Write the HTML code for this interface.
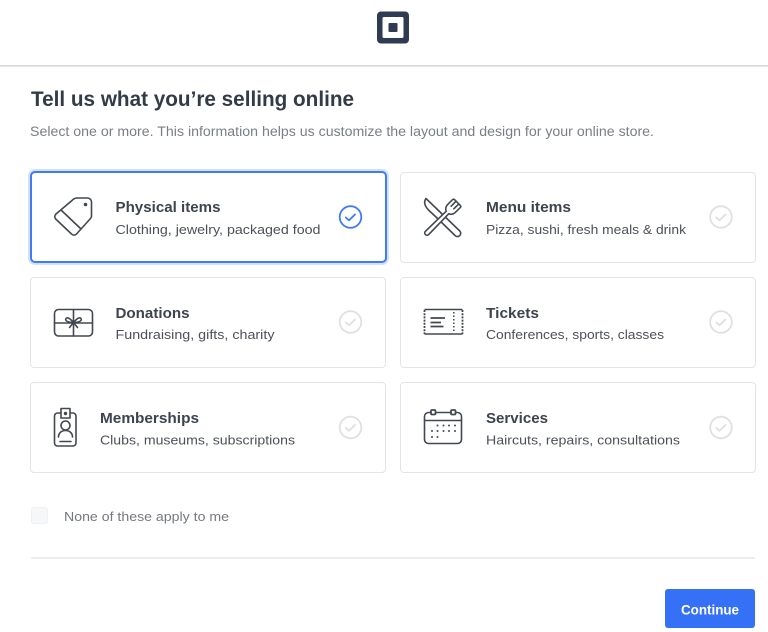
<!DOCTYPE html>
<html lang="en">
<head>
<meta charset="utf-8">
<title>Tell us what you're selling online</title>
<style>
html,body{margin:0;padding:0;background:#fff;}
body{width:768px;height:632px;position:relative;overflow:hidden;font-family:"Liberation Sans",sans-serif;}
.hdr{position:absolute;left:0;top:0;width:768px;height:65px;background:#fff;border-bottom:1px solid #d6d7d9;box-shadow:0 1px 1px #e4e4e4;}
.card{position:absolute;box-sizing:border-box;width:356px;height:91px;background:#fff;border:1px solid #e3e4e6;border-radius:4px;}
.card.sel{left:29.5px;top:170.5px;width:357px;height:92.5px;border:2px solid #3f7bf6;border-radius:5px;box-shadow:0 0 0 2px #d3e1fd;}
.cb{position:absolute;left:31px;top:507px;width:17px;height:17px;box-sizing:border-box;background:#f6f7f9;border:1px solid #eff0f2;border-radius:3px;}
.div{position:absolute;left:31px;top:557px;width:724px;height:2px;background:#ededee;border-radius:1px;}
.btn{position:absolute;left:665px;top:589px;width:90px;height:39px;background:#3571f6;border-radius:3px;}
svg.o{position:absolute;left:0;top:0;}
.t{font-size:14.5px;font-weight:700;fill:#3e444d;}
.s{font-size:13px;fill:#4c5159;}
.i{fill:none;stroke:#434850;stroke-width:1.6;stroke-linecap:round;stroke-linejoin:round;}
.d{fill:#434850;}
</style>
</head>
<body>
<div class="hdr"></div>
<div class="card sel"></div>
<div class="card" style="left:400px;top:171.5px"></div>
<div class="card" style="left:30px;top:277px"></div>
<div class="card" style="left:400px;top:277px"></div>
<div class="card" style="left:30px;top:382px"></div>
<div class="card" style="left:400px;top:382px"></div>
<div class="cb"></div>
<div class="div"></div>
<div class="btn"></div>
<svg class="o" width="768" height="632" viewBox="0 0 768 632" xmlns="http://www.w3.org/2000/svg">
  <!-- logo -->
  <path fill-rule="evenodd" fill="#2e3b52" d="M381 11.500h24a4 4 0 0 1 4 4v24a4 4 0 0 1-4 4h-24a4 4 0 0 1-4-4v-24a4 4 0 0 1 4-4zM384 17a1.500 1.500 0 0 0-1.500 1.500v18a1.500 1.500 0 0 0 1.500 1.500h18a1.500 1.500 0 0 0 1.500-1.500v-18a1.500 1.500 0 0 0-1.500-1.500z"/>
  <rect x="388.500" y="23" width="9" height="9" rx="1" fill="#2e3b52"/>

  <!-- heading -->
  <text x="31" y="106" font-size="21" font-weight="700" fill="#333b47" textLength="323" lengthAdjust="spacingAndGlyphs">Tell us what you’re selling online</text>
  <text x="30" y="136" font-size="13.500" fill="#7a7e85" textLength="624" lengthAdjust="spacingAndGlyphs">Select one or more. This information helps us customize the layout and design for your online store.</text>

  <!-- card text -->
  <text class="t" x="115.500" y="212" textLength="105" lengthAdjust="spacingAndGlyphs">Physical items</text>
  <text class="s" x="115.500" y="234" textLength="205" lengthAdjust="spacingAndGlyphs">Clothing, jewelry, packaged food</text>
  <text class="t" x="486" y="212" textLength="85" lengthAdjust="spacingAndGlyphs">Menu items</text>
  <text class="s" x="486" y="234" textLength="200" lengthAdjust="spacingAndGlyphs">Pizza, sushi, fresh meals &amp; drink</text>
  <text class="t" x="115.500" y="318" textLength="74" lengthAdjust="spacingAndGlyphs">Donations</text>
  <text class="s" x="115.500" y="339" textLength="159" lengthAdjust="spacingAndGlyphs">Fundraising, gifts, charity</text>
  <text class="t" x="486" y="318" textLength="53" lengthAdjust="spacingAndGlyphs">Tickets</text>
  <text class="s" x="486" y="339" textLength="178" lengthAdjust="spacingAndGlyphs">Conferences, sports, classes</text>
  <text class="t" x="100" y="423" textLength="99" lengthAdjust="spacingAndGlyphs">Memberships</text>
  <text class="s" x="100" y="444.500" textLength="195" lengthAdjust="spacingAndGlyphs">Clubs, museums, subscriptions</text>
  <text class="t" x="486" y="423" textLength="62" lengthAdjust="spacingAndGlyphs">Services</text>
  <text class="s" x="486" y="444.500" textLength="194" lengthAdjust="spacingAndGlyphs">Haircuts, repairs, consultations</text>

  <!-- tag -->
  <path class="i" d="M72 200.500 56 214a3.500 3.500 0 0 0-.3 5l15.800 15a3.500 3.500 0 0 0 5 0l14-15.500a3.500 3.500 0 0 0 1-2.500V202a4 4 0 0 0-4-4H76.500a7 7 0 0 0-4.500 2.500z"/>
  <path class="i" d="M61 210 80.500 228.500"/>
  <circle class="d" cx="85.500" cy="204.500" r="1.800"/>

  <!-- knife and fork -->
  <path class="i" d="M426 198.500 459.800 231a3.200 3.200 0 0 1-4.800 4.500L436 217 429 210.500C424.500 206 423.500 202 426 198.500z"/>
  <g transform="translate(444 216) rotate(45)">
    <path d="M-2.300 24a2.300 2.300 0 0 0 4.600 0L1.800-5C4.500-6 5.500-8 5.500-11V-17.500Q5.500-19 4-19H-4Q-5.500-19-5.500-17.500V-11C-5.500-8-4.500-6-1.800-5z" style="fill:#fff;stroke:#434850;stroke-width:1.600;stroke-linejoin:round"/>
    <path class="i" d="M-1.900-19V-12M1.900-19V-12"/>
  </g>

  <!-- gift -->
  <rect class="i" x="54.500" y="309.500" width="38" height="26.500" rx="4"/>
  <path class="i" d="M73.500 309.500V336M54.500 323H92.500"/>
  <path class="i" d="M73.500 322.500C70.500 319 67.500 316.500 66 318.500 64.500 321 68.500 322.500 73.500 322.500 78.500 322.500 82.500 321 81 318.500 79.500 316.500 76.500 319 73.500 322.500L69.500 327.500M73.500 322.500 77.500 327.500"/>

  <!-- ticket -->
  <path d="M424.500 309.500H462.500M424.500 334H462.500" fill="none" stroke="#434850" stroke-width="1.600"/>
  <path d="M453.800 312V332" fill="none" stroke="#434850" stroke-width="1.500" stroke-dasharray="1.500 2"/>
  <path d="M424.500 310V334M462.500 310V334" fill="none" stroke="#434850" stroke-width="1.800" stroke-dasharray="2 1.200"/>
  <path d="M430.500 318H445M430.500 322.500H441M430.500 326.500H443.500" fill="none" stroke="#434850" stroke-width="1.700"/>

  <!-- badge -->
  <rect class="i" x="54.500" y="413" width="21.500" height="33" rx="3"/>
  <path class="i" d="M61 413V408.500H70V418H61z" style="fill:#fff"/>
  <circle class="d" cx="65.500" cy="413.500" r="1.700"/>
  <circle class="i" cx="65.500" cy="425.500" r="4.500"/>
  <path class="i" d="M58.500 437c0-4 3-6.500 7-6.500s7 2.500 7 6.500"/>
  <path class="i" d="M60 441.500H71"/>

  <!-- calendar -->
  <rect class="i" x="424.500" y="412.500" width="37" height="31" rx="4"/>
  <path class="i" d="M424.500 420.500H461.500"/>
  <rect x="431" y="410" width="4.500" height="4.500" rx="1" style="fill:#fff;stroke:#434850;stroke-width:1.800"/>
  <rect x="451" y="410" width="4.500" height="4.500" rx="1" style="fill:#fff;stroke:#434850;stroke-width:1.800"/>
  <g class="d">
    <circle cx="437.500" cy="425.500" r="1"/><circle cx="443.500" cy="425.500" r="1"/><circle cx="449" cy="425.500" r="1"/><circle cx="455" cy="425.500" r="1"/>
    <circle cx="432" cy="431" r="1"/><circle cx="437.500" cy="431" r="1"/><circle cx="443.500" cy="431" r="1"/><circle cx="449" cy="431" r="1"/><circle cx="455" cy="431" r="1"/>
    <circle cx="432" cy="437" r="1"/><circle cx="437.500" cy="437" r="1"/>
  </g>

  <!-- checks -->
  <g fill="none" stroke="#3f7bf6" stroke-width="1.800" stroke-linecap="round" stroke-linejoin="round">
    <circle cx="350.500" cy="217" r="10.800"/>
    <path d="M345.800 217.500 349 220.300 355 214.500"/>
  </g>
  <g fill="none" stroke="#dfe0e2" stroke-width="1.800" stroke-linecap="round" stroke-linejoin="round">
    <circle cx="721" cy="217" r="10.800"/><path d="M716.300 217.500 719.500 220.300 725.500 214.500"/>
    <circle cx="350.500" cy="322" r="10.800"/><path d="M345.800 322.500 349 325.300 355 319.500"/>
    <circle cx="721" cy="322" r="10.800"/><path d="M716.300 322.500 719.500 325.300 725.500 319.500"/>
    <circle cx="350.500" cy="427.500" r="10.800"/><path d="M345.800 428 349 430.800 355 425"/>
    <circle cx="721" cy="427.500" r="10.800"/><path d="M716.300 428 719.500 430.800 725.500 425"/>
  </g>

  <!-- footer -->
  <text x="64" y="521" font-size="13" fill="#75797f" textLength="165" lengthAdjust="spacingAndGlyphs">None of these apply to me</text>
  <text x="681" y="614.500" font-size="13.500" font-weight="700" fill="#fff" textLength="58" lengthAdjust="spacingAndGlyphs">Continue</text>
</svg>
</body>
</html>
